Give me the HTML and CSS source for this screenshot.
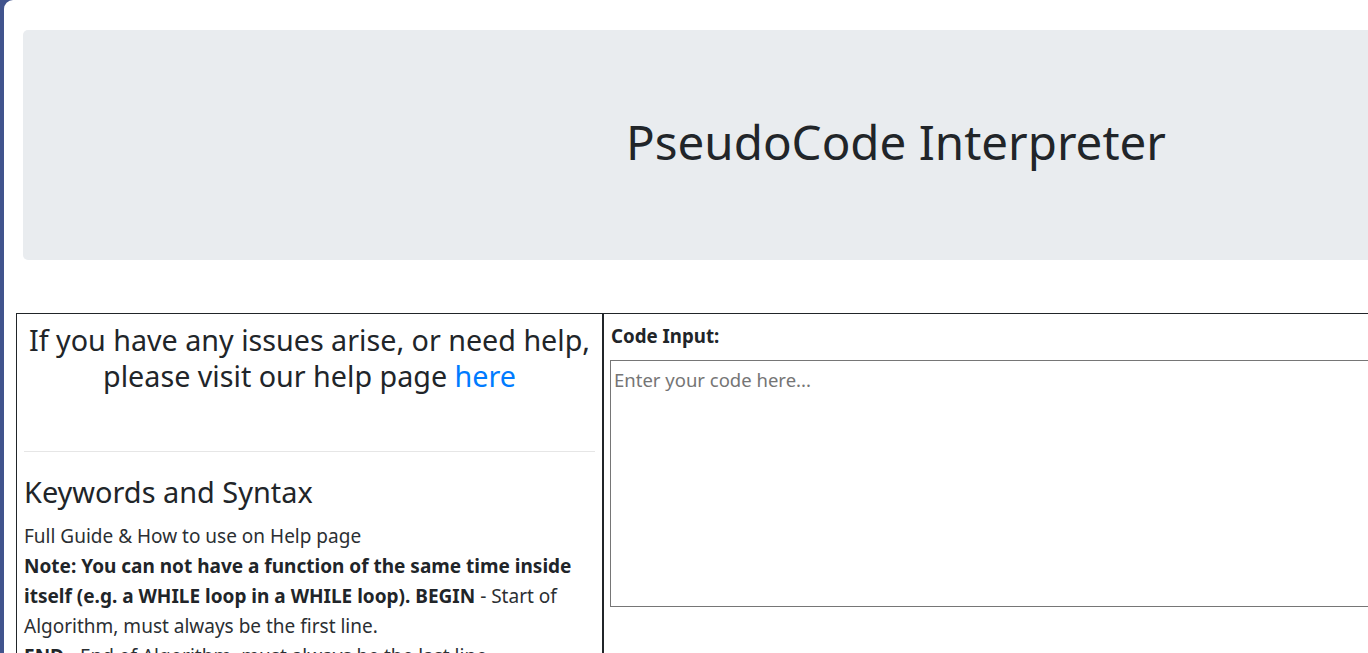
FILE: index.html
```html
<!DOCTYPE html>
<html lang="en">
<head>
<meta charset="utf-8">
<title>PseudoCode Interpreter</title>
<link rel="stylesheet" href="styles.css">
</head>
<body>
<div class="page">
  <div class="jumbotron">
    <h1 class="title">PseudoCode Interpreter</h1>
  </div>
  <table class="main">
    <tr>
      <td class="left">
        <h3 class="help">If you have any issues arise, or need help, please visit our help page <a href="#">here</a></h3>
        <hr class="rule">
        <h3 class="kw">Keywords and Syntax</h3>
        <p class="guide">Full Guide &amp; How to use on Help page<br><b>Note: You can not have a function of the same time inside itself (e.g. a WHILE loop in a WHILE loop).</b> <b>BEGIN</b> - Start of Algorithm, must always be the first line.<br><b>END</b> - End of Algorithm, must always be the last line.</p>
      </td>
      <td class="right">
        <label class="code-label" for="code">Code Input:</label>
        <textarea id="code" class="code" placeholder="Enter your code here..."></textarea>
      </td>
    </tr>
  </table>
</div>
</body>
</html>
```
FILE: styles.css
```css
html, body {
  margin: 0;
  padding: 0;
}
body {
  background: #41548d;
  overflow: hidden;
  height: 653px;
  font-family: "Noto Sans", "Open Sans", sans-serif;
  color: #212529;
}
.page {
  margin-left: 4px;
  background: #fff;
  border-top-left-radius: 9px;
  width: 1800px;
  height: 653px;
  padding-top: 30px;
  box-sizing: border-box;
}
.jumbotron {
  margin-left: 19px;
  width: 1746px;
  height: 230px;
  background: #e9ecef;
  border-radius: 5px;
  display: flex;
  align-items: center;
  justify-content: center;
}
.title {
  margin: 0 0 8px;
  font-size: 47.5px;
  font-weight: 400;
  line-height: 1.2;
}
.main {
  margin-top: 53px;
  margin-left: 12px;
  width: 1750px;
  border-collapse: collapse;
  border: 1px solid #212529;
}
.main td {
  vertical-align: top;
}
.left {
  width: 571px;
  padding: 8px 7px;
  border-right: 2px solid #212529;
}
.right {
  padding: 10px 6px;
}
.help {
  margin: 0;
  text-align: center;
  font-size: 28.7px;
  font-weight: 400;
  line-height: 36px;
}
.help a {
  color: #007bff;
  text-decoration: none;
}
.rule {
  margin: 57px 0 0;
  border: 0;
  border-top: 1px solid #e6e6e6;
}
.kw {
  margin: 22px 0 0;
  font-size: 28.9px;
  font-weight: 400;
  line-height: 36px;
}
.guide {
  margin: 11px 0 0;
  font-size: 19px;
  line-height: 30px;
  font-weight: 400;
  color: #2b2f33;
}
.guide b {
  font-weight: 700;
  color: #212529;
}
.code-label {
  display: block;
  font-weight: 700;
  font-size: 18.7px;
  line-height: 24px;
  margin-bottom: 12px;
  padding-left: 1px;
}
.code {
  display: block;
  box-sizing: border-box;
  width: 1100px;
  height: 247px;
  border: 1px solid #767676;
  padding: 7px 3px;
  font-family: "Noto Sans", "Open Sans", sans-serif;
  font-size: 18.5px;
  line-height: 24px;
  resize: none;
  margin: 0;
}
.code::placeholder {
  color: #757575;
}
```
